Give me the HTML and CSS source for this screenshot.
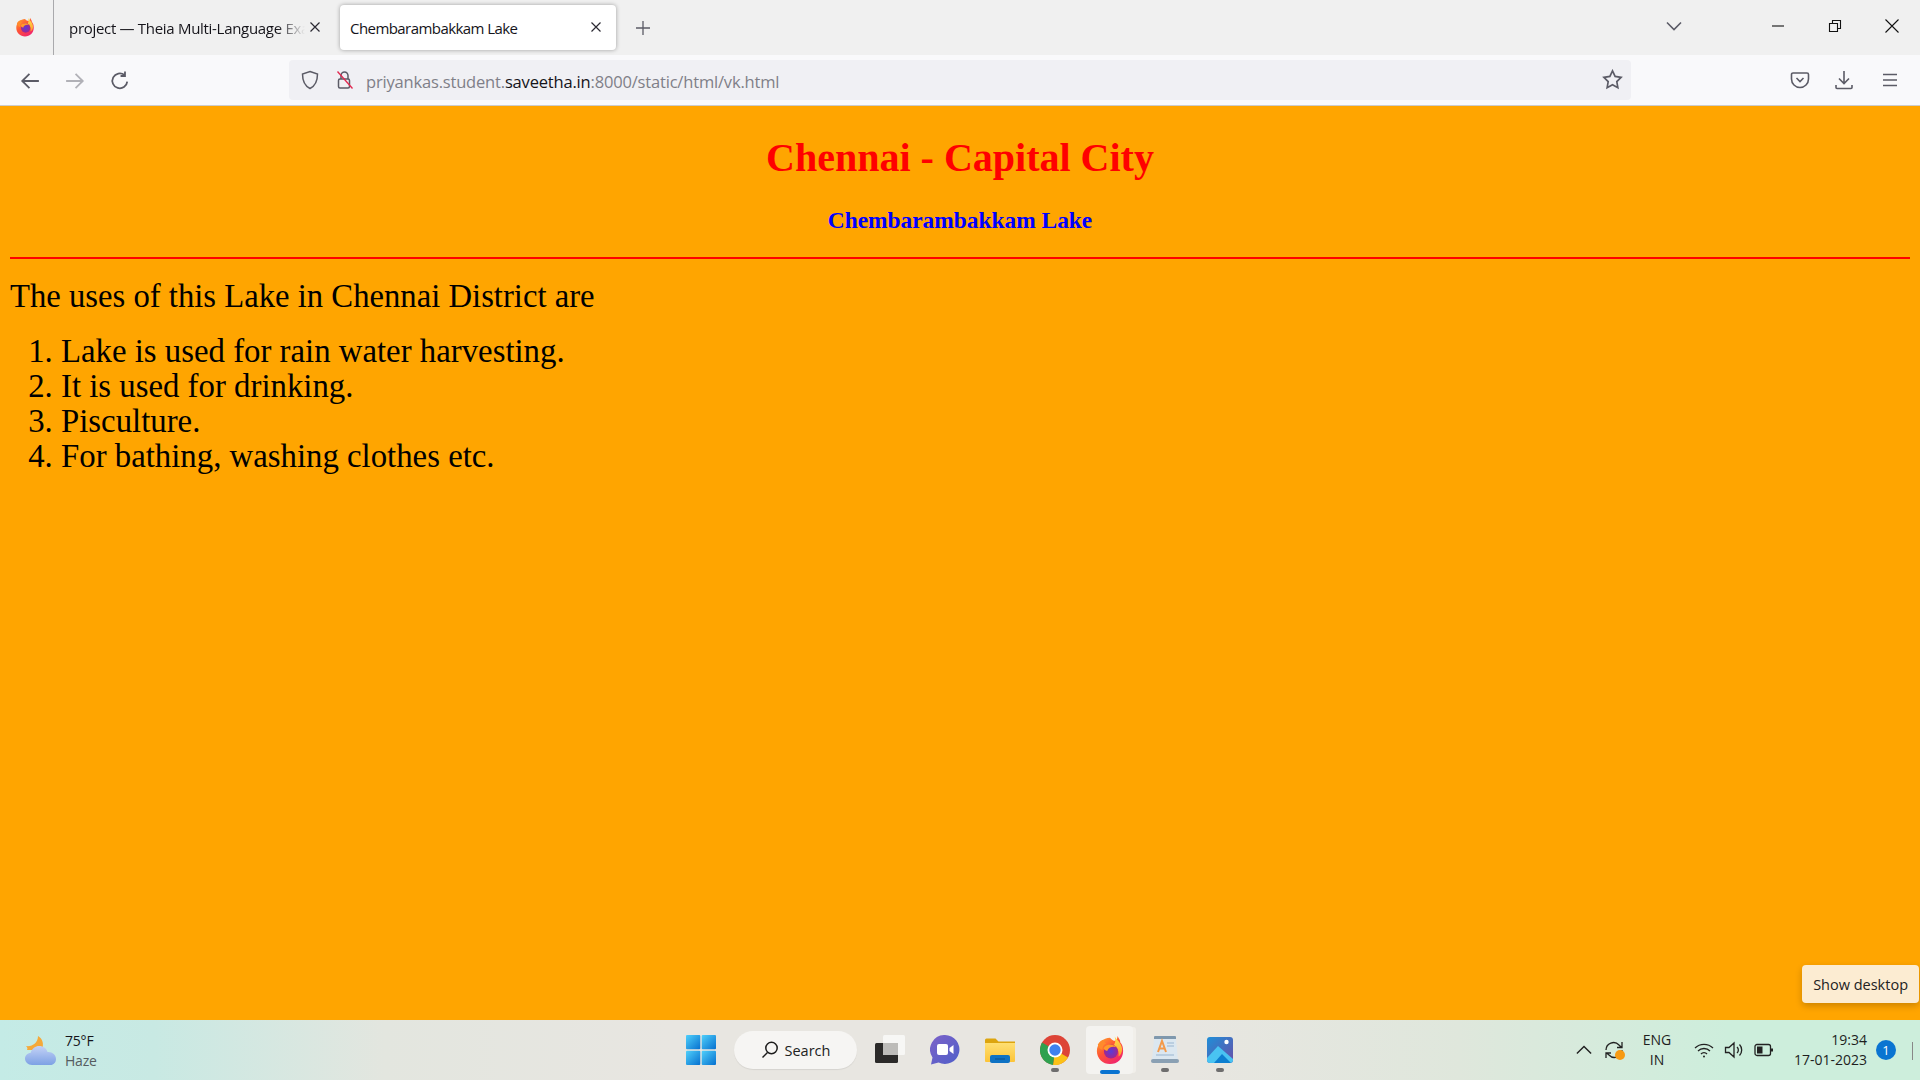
FILE: index.html
```html
<!DOCTYPE html>
<html lang="en">
<head>
<meta charset="utf-8">
<title>Chembarambakkam Lake</title>
<link rel="stylesheet" href="styles.css">
</head>
<body>
<svg class="defs" width="0" height="0" aria-hidden="true">
  <defs>
    <linearGradient id="ffBody" x1="0" y1="0" x2="0.7" y2="1"><stop offset="0" stop-color="#ffb02e"/><stop offset="0.5" stop-color="#ff5634"/><stop offset="1" stop-color="#f0246e"/></linearGradient>
    <linearGradient id="ffTop" x1="0" y1="0" x2="0" y2="1"><stop offset="0" stop-color="#ffe34d"/><stop offset="1" stop-color="#ff9a2a"/></linearGradient>
    <radialGradient id="ffCore"><stop offset="0" stop-color="#5b3bd8"/><stop offset="1" stop-color="#a0278f"/></radialGradient>
    <linearGradient id="winTile" x1="0" y1="0" x2="1" y2="1"><stop offset="0" stop-color="#4fd0fb"/><stop offset="1" stop-color="#0670cf"/></linearGradient>
    <linearGradient id="chatG" x1="0" y1="0" x2="1" y2="1"><stop offset="0" stop-color="#7d62c8"/><stop offset="1" stop-color="#4f5fc9"/></linearGradient>
    <linearGradient id="photoG" x1="0" y1="0" x2="1" y2="1"><stop offset="0" stop-color="#1e8fd8"/><stop offset="1" stop-color="#6a4fa8"/></linearGradient>
    <linearGradient id="cloudG" x1="0" y1="0" x2="0" y2="1"><stop offset="0" stop-color="#c4d2f6"/><stop offset="1" stop-color="#7da1e4"/></linearGradient>
    <linearGradient id="folderG" x1="0" y1="0" x2="0" y2="1"><stop offset="0" stop-color="#ffdf72"/><stop offset="1" stop-color="#fcc438"/></linearGradient>
    <symbol id="firefox" viewBox="0 0 32 32">
      <path d="M16 3 C9 3 2 9 2 17 C2 25 8.500 31 16 31 C24 31 30 25 30 17 C30 13 29 10 27 8 C27 5 25 3 24 1 C24 5 22 7 20 6 C18 5.500 17 4 16 3 Z" fill="url(#ffBody)"/>
      <path d="M21 1.500 C23 5 28 8 29 15 C29 19 27 22 25 23 C26 18 24 13 20 11 C22 8 22 5 21 1.500 Z" fill="url(#ffTop)"/>
      <path d="M3 10 C5 7 7 5 10 5 C9 7 10 8 12 9 C9 10 8 13 8 16 C5 15 4 13 3 10 Z" fill="#ff8a2c"/>
      <circle cx="17" cy="17.500" r="7.500" fill="url(#ffCore)"/>
      <path d="M9 14 C12 9 19 9 23 13 C19 11.500 14 13 13 17 C11 16.500 10 15.500 9 14 Z" fill="#ff9a2a"/>
    </symbol>
  </defs>
</svg>

<header class="tabstrip">
  <div class="ff-slot"><svg class="ff-small"><use href="#firefox"/></svg></div>
  <div class="tab tab-bg">
    <span class="tab-title tab-fade">project — Theia Multi-Language Exa</span>
    <svg class="tab-x" viewBox="0 0 12 12"><path d="M1.500 1.500l9 9M10.500 1.500l-9 9"/></svg>
  </div>
  <div class="tab tab-active">
    <span class="tab-title">Chembarambakkam Lake</span>
    <svg class="tab-x" viewBox="0 0 12 12"><path d="M1.500 1.500l9 9M10.500 1.500l-9 9"/></svg>
  </div>
  <svg class="new-tab" viewBox="0 0 16 16"><path d="M8 1v14M1 8h14"/></svg>
  <div class="strip-spacer"></div>
  <svg class="tabs-menu" viewBox="0 0 16 10"><path d="M1 1.500l7 7 7-7"/></svg>
  <div class="win-controls">
    <svg class="win-btn" viewBox="0 0 14 14"><path d="M1 7h12"/></svg>
    <svg class="win-btn" viewBox="0 0 14 14"><path d="M1.500 4.500h8v8h-8zM4.500 4.500v-3h8v8h-3"/></svg>
    <svg class="win-btn" viewBox="0 0 14 14"><path d="M.5.500l13 13M13.500.500l-13 13"/></svg>
  </div>
</header>

<nav class="toolbar">
  <div class="nav-group">
    <svg class="ic" viewBox="0 0 18 18"><path d="M17 9H2M8.500 2.500L2 9l6.500 6.500"/></svg>
    <svg class="ic ic-off" viewBox="0 0 18 18"><path d="M1 9h15M9.500 2.500L16 9l-6.500 6.500"/></svg>
    <svg class="ic" viewBox="0 0 18 18"><path d="M15.500 9.500A6.700 6.700 0 1 1 13 3.600M13.500 .5v4h-4"/></svg>
  </div>
  <div class="urlbar">
    <svg class="url-ic" viewBox="0 0 18 20"><path d="M9 1.500l7.500 2.500c0 7-1.500 11.500-7.500 14.500C3 15.500 1.500 11 1.500 4z"/></svg>
    <svg class="url-ic" viewBox="0 0 18 20"><rect x="2.500" y="9" width="11" height="9" rx="1.500"/><path d="M5 9V5.500a3.500 3.500 0 0 1 7 0V9"/><path class="lock-slash" d="M1.500 1.500l15 17"/></svg>
    <div class="url-text"><span class="dim">priyankas.student.</span>saveetha.in<span class="dim">:8000/static/html/vk.html</span></div>
    <svg class="url-star" viewBox="0 0 20 20"><path d="M10 1.800l2.500 5.300 5.700.8-4.100 4.100 1 5.800-5.100-2.800-5.100 2.800 1-5.800L1.800 7.900l5.700-.8z"/></svg>
  </div>
  <div class="tool-group">
    <svg class="ic" viewBox="0 0 20 20"><path d="M3 3h14a1.500 1.500 0 0 1 1.500 1.500V9a8.500 8.500 0 0 1-17 0V4.500A1.500 1.500 0 0 1 3 3z"/><path d="M6.500 8l3.500 3.500L13.500 8"/></svg>
    <svg class="ic" viewBox="0 0 20 20"><path d="M10 1v12M5 8.500l5 5 5-5M2 15v2.500a1 1 0 0 0 1 1h14a1 1 0 0 0 1-1V15"/></svg>
    <svg class="ic ic-menu" viewBox="0 0 20 20"><path d="M3 4.500h14M3 10h14M3 15.500h14"/></svg>
  </div>
</nav>

<main class="page">
  <h1 class="page-title">Chennai - Capital City</h1>
  <h2 class="page-subtitle">Chembarambakkam Lake</h2>
  <hr class="rule">
  <p class="intro">The uses of this Lake in Chennai District are</p>
  <ol class="uses">
    <li>Lake is used for rain water harvesting.</li>
    <li>It is used for drinking.</li>
    <li>Pisculture.</li>
    <li>For bathing, washing clothes etc.</li>
  </ol>
  <div class="tooltip">Show desktop</div>
</main>

<footer class="taskbar">
  <div class="weather">
    <svg class="weather-ic" viewBox="0 0 31 29">
      <path d="M13 0 C18 3 19 8 17 14 L2 14 C3 12 2 11 1 10 C7 11 13 7 13 0 Z" fill="#f5a93a"/>
      <path d="M7 29 C3 29 0 26 0 22.500 C0 19.500 2.500 17 5.500 17 C7 12.500 10.500 10 14 10 C18.500 10 21.500 12.500 22.500 16 C27 15.500 31 18.500 31 23 C31 26.500 28.500 29 25.500 29 Z" fill="url(#cloudG)"/>
    </svg>
    <div class="weather-text">
      <div class="temp">75°F</div>
      <div class="cond">Haze</div>
    </div>
  </div>

  <div class="task-icons">
    <div class="slot"><svg class="task-ic" viewBox="0 0 30 30"><g fill="url(#winTile)"><rect x="0" y="0" width="14.300" height="14.300" rx="1"/><rect x="15.700" y="0" width="14.300" height="14.300" rx="1"/><rect x="0" y="15.700" width="14.300" height="14.300" rx="1"/><rect x="15.700" y="15.700" width="14.300" height="14.300" rx="1"/></g></svg></div>
    <div class="search-pill">
      <svg class="search-ic" viewBox="0 0 18 18"><circle cx="10.500" cy="7" r="5.700"/><path d="M6.500 11.500L1.500 16.500"/></svg>
      <span>Search</span>
    </div>
    <div class="slot"><svg class="task-ic" viewBox="0 0 30 30"><rect x="8" y="0" width="22" height="20" rx="1.500" fill="#f7f7f5"/><rect x="0" y="8" width="23" height="20" rx="1.500" fill="#2b2a29"/><rect x="8" y="8" width="15" height="12" fill="#bdbcb9"/></svg></div>
    <div class="slot"><svg class="task-ic" viewBox="0 0 30 30"><path d="M15 0a14.500 14.500 0 1 1-6.500 27.500L1 29.500l1.500-7A14.500 14.500 0 0 1 15 0z" fill="url(#chatG)"/><rect x="7" y="9" width="11" height="11" rx="2" fill="#fff"/><path d="M19.500 13l4-3v9l-4-3z" fill="#fff"/></svg></div>
    <div class="slot"><svg class="task-ic" viewBox="0 0 30 30"><path d="M0 5a1.500 1.500 0 0 1 1.500-1.500h9l3 3H30V10H0z" fill="#dda50f"/><path d="M0 8h30v18a1 1 0 0 1-1 1H1a1 1 0 0 1-1-1z" fill="url(#folderG)"/><rect x="5" y="20" width="20" height="8" rx="2" fill="#0e72c4"/><path d="M10 24h10" stroke="#0b4f8a"/></svg></div>
    <div class="slot slot-run"><svg class="task-ic" viewBox="0 0 30 30"><circle cx="15" cy="15" r="15" fill="#dd4437"/><path d="M15 15L28 22.500A15 15 0 0 1 13 30z" fill="#fbc117"/><path d="M15 15L13 30A15 15 0 0 1 2 7.500z" fill="#2fa14f"/><circle cx="15" cy="15" r="7.500" fill="#fff"/><circle cx="15" cy="15" r="5.700" fill="#3f81ef"/></svg><i class="dot"></i></div>
    <div class="slot slot-active"><svg class="task-ic ff-big"><use href="#firefox"/></svg><i class="dot dot-active"></i></div>
    <div class="slot slot-run"><svg class="task-ic" viewBox="0 0 30 30"><rect x="4" y="1" width="22" height="6" rx="1" fill="#7f98ad"/><path d="M4 4h22l2 21H2z" fill="#dbe7f0"/><rect x="1" y="24" width="28" height="4" rx="2" fill="#8aa0b3"/><path d="M8 17l4-11 4 11M9.500 13.500h5" fill="none" stroke="#f39a4a" stroke-width="2"/><path d="M17 8h7M17 11h7M6 20h18" stroke="#9ab6cf" stroke-width="1.200"/></svg><i class="dot"></i></div>
    <div class="slot slot-run"><svg class="task-ic photos" viewBox="0 0 26 26"><rect width="26" height="26" rx="3" fill="url(#photoG)"/><circle cx="19.500" cy="5" r="2.200" fill="#fff"/><path d="M0 21L11 9l15 13v1a3 3 0 0 1-3 3H3a3 3 0 0 1-3-3z" fill="#49c3f2"/><path d="M7 26l8-9 9 9z" fill="#0d7fd0"/></svg><i class="dot"></i></div>
  </div>

  <div class="tray">
    <svg class="tray-ic chev" viewBox="0 0 18 10"><path d="M1 9l8-8 8 8"/></svg>
    <div class="sync">
      <svg class="tray-ic" viewBox="0 0 20 20"><path d="M2 10a7.500 7.500 0 0 1 13-5l2.500 2.500M18 2v5.500h-5M18 10a7.500 7.500 0 0 1-13 5l-2.500-2M2 18v-5h5"/></svg>
      <i class="sync-dot"></i>
    </div>
    <div class="lang"><div>ENG</div><div>IN</div></div>
    <svg class="tray-ic" viewBox="0 0 20 16"><path d="M1 6a13 13 0 0 1 18 0M4 9a8.500 8.500 0 0 1 12 0M7 12a4 4 0 0 1 6 0"/><circle class="fill" cx="10" cy="14.500" r="1"/></svg>
    <svg class="tray-ic" viewBox="0 0 20 18"><path d="M1.500 6.500h3.500l5-4.500v14l-5-4.500H1.500zM13 6a4 4 0 0 1 0 6M15.500 3.500a8 8 0 0 1 0 11"/></svg>
    <svg class="tray-ic" viewBox="0 0 20 14"><rect x="1" y="1.500" width="15.500" height="11" rx="2"/><rect class="fill" x="3" y="3.500" width="5.500" height="7"/><rect class="fill" x="17" y="5.500" width="2" height="3"/></svg>
    <div class="clock"><div>19:34</div><div>17-01-2023</div></div>
    <div class="badge">1</div>
    <i class="peek"></i>
  </div>
</footer>
</body>
</html>
```

FILE: styles.css
```css
* { box-sizing: border-box; }
html, body { margin: 0; height: 100%; }
body {
  display: flex;
  flex-direction: column;
  height: 100vh;
  overflow: hidden;
  font-family: "Open Sans", "Noto Sans", sans-serif;
  color: #15141a;
  background: orange;
}
.defs { position: absolute; }
svg { display: block; flex: none; fill: none; }

/* Tab strip */
.tabstrip {
  display: flex;
  align-items: center;
  height: 55px;
  flex: none;
  background: #f0f0f0;
}
.ff-slot {
  width: 54px;
  height: 55px;
  display: flex;
  align-items: center;
  padding-left: 15px;
  border-right: 1px solid #a9a9ac;
}
.ff-small { width: 20px; height: 20px; margin-top: -1px; }
.tab {
  display: flex;
  align-items: center;
  height: 45px;
  margin-top: -1px;
  font-size: 15px;
}
.tab-bg { width: 276px; padding: 0 9px 0 15px; margin-right: 10px; letter-spacing: -0.3px; }
.tab-active {
  width: 276px;
  padding: 0 14px 0 10px;
  letter-spacing: -0.56px;
  background: #fff;
  border-radius: 4px;
  box-shadow: 0 0 4px rgba(0, 0, 0, .35);
}
.tab-title { flex: 1; padding-top: 2px; white-space: nowrap; overflow: hidden; }
.tab-fade {
  -webkit-mask-image: linear-gradient(90deg, #000 88%, transparent 100%);
  mask-image: linear-gradient(90deg, #000 88%, transparent 100%);
}
.tab-x { width: 12px; height: 12px; margin-left: 4px; margin-top: -1px; stroke: #2b2a33; stroke-width: 1.2; }
.new-tab { width: 16px; height: 16px; margin-left: 19px; stroke: #5b5b66; stroke-width: 1.3; }
.strip-spacer { flex: 1; }
.tabs-menu { width: 16px; height: 10px; margin-right: 89px; margin-top: -3px; stroke: #5b5b66; stroke-width: 1.6; }
.win-controls { display: flex; gap: 43px; margin-right: 21px; margin-top: -3px; }
.win-btn { width: 14px; height: 14px; stroke: #111; stroke-width: 1.1; }

/* Toolbar */
.toolbar {
  display: flex;
  align-items: center;
  height: 51px;
  flex: none;
  padding-bottom: 1px;
  background: #f9f9fb;
  border-bottom: 1px solid #ccc;
}
.ic { width: 20px; height: 20px; stroke: #5b5b66; stroke-width: 1.6; }
.ic-off { opacity: .45; }
.ic-menu { margin-left: 2px; }
.nav-group { display: flex; gap: 25px; width: 289px; padding: 2px 0 0 20px; }
.urlbar {
  display: flex;
  align-items: center;
  width: 1342px;
  height: 40px;
  padding-left: 12px;
  background: #f0f0f4;
  border-radius: 4px;
}
.url-ic { width: 18px; height: 20px; margin-right: 17px; stroke: #5b5b66; stroke-width: 1.5; }
.url-ic + .url-ic { margin-right: 12px; }
.lock-slash { stroke: #e22850; stroke-width: 1.3; }
.url-text { flex: 1; padding-top: 3px; font-size: 16.500px; letter-spacing: -0.18px; color: #15141a; white-space: nowrap; }
.dim { color: #7f7f88; }
.url-star { width: 21px; height: 21px; margin-right: 8px; stroke: #5b5b66; stroke-width: 1.6; }
.tool-group { display: flex; gap: 24px; margin-left: 159px; }

/* Page */
.page {
  position: relative;
  flex: 1;
  min-height: 0;
  padding: 0 10px;
  font-family: "Liberation Serif", serif;
  color: #000;
  background: orange;
}
.page-title { margin: 29px 0 0; text-align: center; font-size: 40px; line-height: 46px; color: red; }
.page-subtitle { margin: 25px 0 0; text-align: center; font-size: 23.400px; line-height: 28px; color: blue; }
.rule { height: 2px; margin: 23px 0 0; border: 0; background: red; }
.intro { margin: 18px 0 0; font-size: 32.700px; line-height: 39px; }
.uses { margin: 18px 0 0; padding: 0 0 0 51px; font-size: 32.800px; line-height: 35px; }
.tooltip {
  position: absolute;
  right: 1px;
  bottom: 17px;
  display: flex;
  align-items: center;
  height: 38px;
  padding: 0 11px;
  font-family: "Open Sans", sans-serif;
  font-size: 14.500px;
  color: #222;
  background: #fcecd2;
  border-radius: 4px;
  box-shadow: 0 3px 7px rgba(0, 0, 0, .2);
}

/* Taskbar */
.taskbar {
  position: relative;
  display: grid;
  grid-template-columns: 1fr auto 1fr;
  align-items: center;
  height: 60px;
  flex: none;
  background: linear-gradient(90deg, #c4ebe6 0, #c8e9e3 8%, #e3e6df 20%, #e8e6e1 35%, #e8e6e1 62%, #dfe7dc 76%, #cdeedc 90%, #cdeedc 100%);
}
.weather { display: flex; align-items: center; gap: 9px; padding-left: 25px; }
.weather-ic { width: 31px; height: 29px; }
.weather-text { padding-top: 1px; font-size: 14px; line-height: 20px; letter-spacing: -0.2px; }
.cond { color: #555c60; }
.task-icons { display: flex; align-items: center; height: 60px; }
.slot {
  position: relative;
  width: 55px;
  height: 48px;
  display: flex;
  align-items: center;
  justify-content: center;
}
.task-ic { width: 30px; height: 30px; }
.photos { width: 26px; height: 26px; }
.ff-big { width: 30px; height: 30px; }
.slot-active {
  width: 47px;
  margin: 0 4px;
  background: #f4f3f0;
  border-radius: 4px;
  box-shadow: 4px 0 0 -1px #f1efea;
}
.dot {
  position: absolute;
  left: 50%;
  bottom: 2px;
  width: 8px;
  height: 4px;
  margin-left: -4px;
  border-radius: 2px;
  background: #6e6e6e;
}
.dot-active { width: 20px; margin-left: -10px; height: 4px; bottom: 0; background: #0a74d1; }
.search-pill {
  display: flex;
  align-items: center;
  justify-content: center;
  gap: 6px;
  width: 123px;
  height: 38px;
  margin: 0 5px 0 6px;
  font-size: 14.500px;
  color: #222;
  background: #f6f5f3;
  border-radius: 19px;
  box-shadow: 0 1px 1px rgba(0, 0, 0, .08);
}
.search-ic { width: 18px; height: 18px; stroke: #1c1c1c; stroke-width: 1.5; }
.tray { display: flex; align-items: center; justify-content: flex-end; height: 60px; font-size: 14px; color: #1e1e1e; }
.tray-ic { width: 20px; height: 20px; stroke: #222; stroke-width: 1.3; }
.tray-ic .fill { fill: #222; stroke: none; }
.chev { width: 16px; height: 10px; margin-right: 12px; stroke-width: 1.6; }
.sync { position: relative; margin-right: 18px; }
.sync-dot {
  position: absolute;
  right: -1px;
  bottom: 0;
  width: 10px;
  height: 10px;
  border-radius: 50%;
  background: #f79a12;
}
.lang { width: 30px; margin-right: 22px; text-align: center; line-height: 20px; }
.lang + .tray-ic { margin-right: 10px; }
.lang + .tray-ic + .tray-ic { margin-right: 10px; }
.clock { width: 93px; text-align: right; line-height: 20px; }
.badge {
  width: 20px;
  height: 20px;
  margin: 0 24px 0 9px;
  font-size: 13px;
  line-height: 20px;
  text-align: center;
  color: #fff;
  background: #0a74d1;
  border-radius: 50%;
}
.peek { position: absolute; right: 7px; top: 22px; width: 1px; height: 18px; background: #888; }
```
